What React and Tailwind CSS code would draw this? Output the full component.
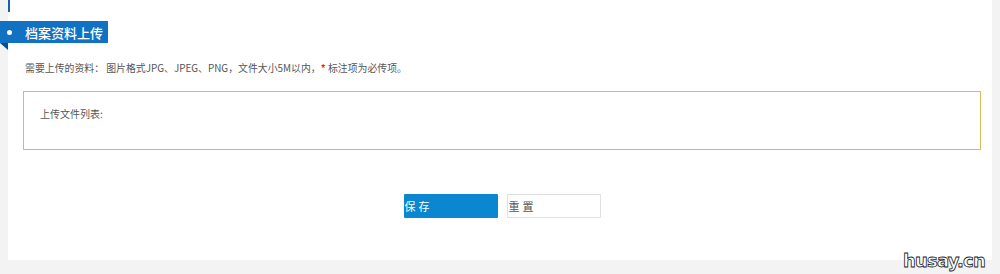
import React from "react";

const App = () => {
  return (
    <div
      className="w-[1000px] h-[274px] bg-[#f3f3f3] flex"
      style={{ fontFamily: '"Microsoft YaHei", "Noto Sans CJK SC", sans-serif' }}
    >
      <div className="w-[8px]" />
      <div className="relative w-[984px] h-[260px] bg-white">
        {/* top accent line */}
        <div className="absolute left-0 top-0 w-[2px] h-[12px] bg-[#1b5fa8]" />

        {/* section title tag */}
        <div className="relative -ml-[8px] mt-[21px] w-[108px] h-[22px] bg-[#1172c4] flex items-center">
          <span className="ml-[7px] w-[5px] h-[5px] rounded-full bg-white" />
          <span className="ml-[13px] text-[13px] text-white leading-none font-medium">档案资料上传</span>
          <span className="absolute left-0 top-[22px] w-0 h-0 border-t-[7px] border-t-[#0b4f8a] border-l-[8px] border-l-transparent" />
        </div>

        <div className="ml-[17px] mt-[21px] text-[9.9px] text-[#555] leading-none">
          需要上传的资料： 图片格式JPG、JPEG、PNG，文件大小5M以内，
          <span className="text-[#ff2020] font-bold">*</span> 标注项为必传项。
        </div>

        <div className="ml-[15px] mt-[17px] w-[958px] h-[59px] border border-[#e2b75a] px-[16px] pt-[17px]">
          <div className="text-[10px] text-[#555] leading-none">上传文件列表:</div>
        </div>

        <div className="mt-[44px] flex justify-center gap-[9px] pl-[4px]">
          <button className="w-[94px] h-[24px] bg-[#0a87d0] text-white text-[11px] text-left pl-[1px] tracking-[3px] rounded-[1px]">
            保存
          </button>
          <button className="w-[94px] h-[24px] bg-white border border-[#e0e0e0] text-[#555] text-[11px] text-left pl-[1px] tracking-[3px]">
            重置
          </button>
        </div>

        <div
          className="absolute right-[7px] bottom-[-10px] text-[18px] font-black text-white leading-none tracking-[-0.8px]"
          style={{ WebkitTextStroke: "0.8px #222", fontFamily: '"DejaVu Sans", sans-serif' }}
        >
          husay.cn
        </div>
      </div>
    </div>
  );
};

export default App;
